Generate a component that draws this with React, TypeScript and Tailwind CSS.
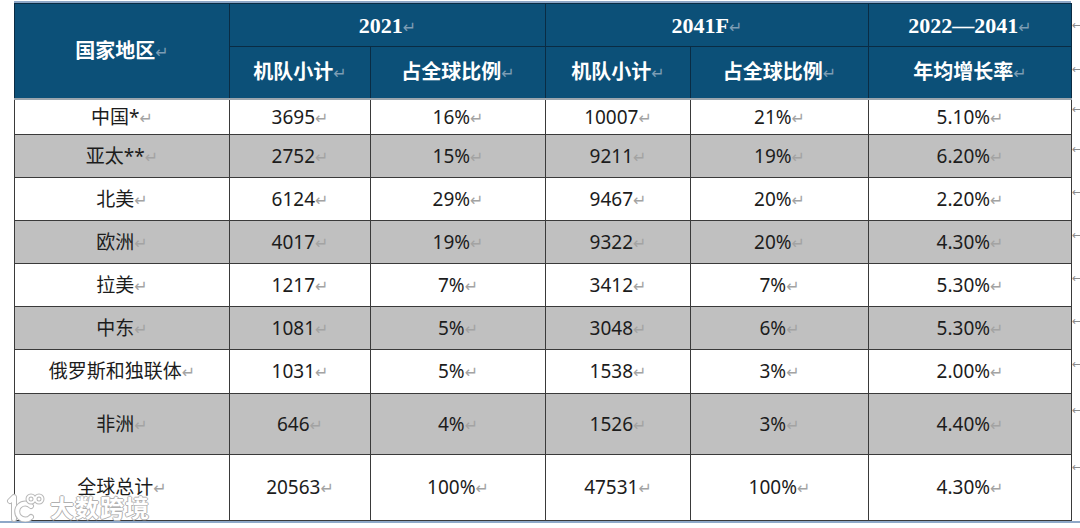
import React from 'react';

type Row = { name: string; a: string; b: string; c: string; d: string; e: string; gray: boolean; h: string; arrow: string };

const rows: Row[] = [
  { name: '中国*', a: '3695', b: '16%', c: '10007', d: '21%', e: '5.10%', gray: false, h: 'h-[36px]', arrow: 'pt-[2px]' },
  { name: '亚太**', a: '2752', b: '15%', c: '9211', d: '19%', e: '6.20%', gray: true, h: 'h-[43px]', arrow: 'pt-[6px]' },
  { name: '北美', a: '6124', b: '29%', c: '9467', d: '20%', e: '2.20%', gray: false, h: 'h-[43px]', arrow: 'pt-[6px]' },
  { name: '欧洲', a: '4017', b: '19%', c: '9322', d: '20%', e: '4.30%', gray: true, h: 'h-[43px]', arrow: 'pt-[6px]' },
  { name: '拉美', a: '1217', b: '7%', c: '3412', d: '7%', e: '5.30%', gray: false, h: 'h-[43px]', arrow: 'pt-[6px]' },
  { name: '中东', a: '1081', b: '5%', c: '3048', d: '6%', e: '5.30%', gray: true, h: 'h-[43px]', arrow: 'pt-[6px]' },
  { name: '俄罗斯和独联体', a: '1031', b: '5%', c: '1538', d: '3%', e: '2.00%', gray: false, h: 'h-[44px]', arrow: 'pt-[6px]' },
  { name: '非洲', a: '646', b: '4%', c: '1526', d: '3%', e: '4.40%', gray: true, h: 'h-[61px]', arrow: 'pt-[8px]' },
  { name: '全球总计', a: '20563', b: '100%', c: '47531', d: '100%', e: '4.30%', gray: false, h: 'h-[66px]', arrow: 'pt-[4px]' },
];

function Mark({ head }: { head?: boolean }) {
  return (
    <span
      className={`font-['DejaVu_Sans',sans-serif] text-[16px] font-normal ${
        head ? 'text-[#7d9db4]' : 'text-[#a3a3a3]'
      }`}
    >
      ↵
    </span>
  );
}

function HeadCell({ children, rowSpan, colSpan, cls = '' }: { children: React.ReactNode; rowSpan?: number; colSpan?: number; cls?: string }) {
  return (
    <td
      rowSpan={rowSpan}
      colSpan={colSpan}
      className={`border border-[#0a2c44] bg-[#0c5078] text-white text-center align-middle font-bold text-[20px] font-['Liberation_Serif','Noto_Sans_CJK_SC',serif] ${cls}`}
    >
      {children}
      <Mark head />
    </td>
  );
}

function Cell({ children }: { children: React.ReactNode }) {
  return (
    <td className="border border-[#3a3a3a] text-center align-middle text-[19px] text-[#1c1c1c]">
      {children}
      <Mark />
    </td>
  );
}

function Arrow({ cls = '' }: { cls?: string }) {
  return (
    <td className={`align-top pl-0 text-[12px] leading-[16px] text-[#8c8c8c] font-['DejaVu_Sans',sans-serif] ${cls}`}>←</td>
  );
}

export default function App() {
  return (
    <div className="relative w-[1080px] h-[528px] bg-white overflow-hidden">
      <div className="pt-[1px]">
        <div className="ml-[14px] w-[1057px] h-[2px] bg-[#8ea8c8]" />
        <table className="ml-[14px] w-[1066px] border-collapse table-fixed font-['Noto_Sans','Noto_Sans_CJK_SC',sans-serif]">
          <colgroup>
            <col className="w-[215px]" />
            <col className="w-[141px]" />
            <col className="w-[175px]" />
            <col className="w-[145px]" />
            <col className="w-[178px]" />
            <col className="w-[203px]" />
            <col className="w-[9px]" />
          </colgroup>
          <tbody>
            <tr className="h-[43px]">
              <HeadCell rowSpan={2} cls="border-b-2 border-b-[#9ba5ad]">国家地区</HeadCell>
              <HeadCell colSpan={2} cls="text-[22px]">2021</HeadCell>
              <HeadCell colSpan={2} cls="text-[22px]">2041F</HeadCell>
              <HeadCell cls="text-[22px]">2022—2041</HeadCell>
              <Arrow cls="!align-middle" />
            </tr>
            <tr className="h-[52px]">
              <HeadCell cls="border-b-2 border-b-[#9ba5ad]">机队小计</HeadCell>
              <HeadCell cls="border-b-2 border-b-[#9ba5ad]">占全球比例</HeadCell>
              <HeadCell cls="border-b-2 border-b-[#9ba5ad]">机队小计</HeadCell>
              <HeadCell cls="border-b-2 border-b-[#9ba5ad]">占全球比例</HeadCell>
              <HeadCell cls="border-b-2 border-b-[#9ba5ad]">年均增长率</HeadCell>
              <Arrow cls="pt-[14px]" />
            </tr>
            {rows.map((r) => (
              <tr key={r.name} className={`${r.h} ${r.gray ? 'bg-[#c0c0c0]' : 'bg-white'}`}>
                <Cell>{r.name}</Cell>
                <Cell>{r.a}</Cell>
                <Cell>{r.b}</Cell>
                <Cell>{r.c}</Cell>
                <Cell>{r.d}</Cell>
                <Cell>{r.e}</Cell>
                <Arrow cls={`bg-white ${r.arrow}`} />
              </tr>
            ))}
          </tbody>
        </table>
        <div className="w-[1080px] h-[2px] bg-[#8ea8c8]" />
      </div>

      {/* watermark */}
      <div className="absolute left-[6px] top-[492px] flex items-center gap-[4px]">
        <svg width="40" height="30" viewBox="0 0 40 30" fill="none">
          <path d="M4 9 L8 5 L8 27" stroke="#b8b8b8" strokeWidth="6" strokeLinecap="round" strokeLinejoin="round" />
          <path d="M4 9 L8 5 L8 27" stroke="#ffffff" strokeWidth="4" strokeLinecap="round" strokeLinejoin="round" />
          <path d="M25 14 A8 8 0 1 0 25 25" stroke="#b8b8b8" strokeWidth="6" strokeLinecap="round" />
          <path d="M25 14 A8 8 0 1 0 25 25" stroke="#ffffff" strokeWidth="4" strokeLinecap="round" />
          <circle cx="25" cy="7" r="3.5" stroke="#b8b8b8" strokeWidth="4" />
          <circle cx="33" cy="7" r="3.5" stroke="#b8b8b8" strokeWidth="4" />
          <circle cx="25" cy="7" r="3.5" stroke="#ffffff" strokeWidth="2" />
          <circle cx="33" cy="7" r="3.5" stroke="#ffffff" strokeWidth="2" />
        </svg>
        <span className="text-[24px] leading-[28px] font-bold text-white tracking-[1px] font-['Noto_Sans_CJK_SC',sans-serif] [text-shadow:1px_0_0_#b0b0b0,-1px_0_0_#b0b0b0,0_1px_0_#b0b0b0,0_-1px_0_#b0b0b0]">
          大数跨境
        </span>
      </div>
    </div>
  );
}
